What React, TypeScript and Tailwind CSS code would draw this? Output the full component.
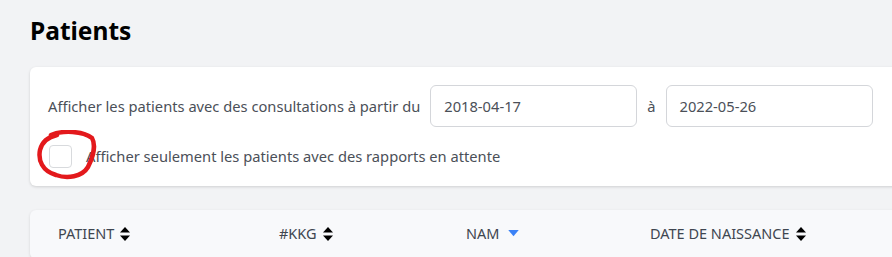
function SortIcon() {
  return (
    <svg viewBox="0 0 10 16" className="h-[16px] w-[10px] text-black" fill="currentColor">
      <path d="M5 1 L10 6.5 H0 Z" />
      <path d="M5 15 L10 9.5 H0 Z" />
    </svg>
  );
}

function CaretDown() {
  return (
    <svg viewBox="0 0 12 8" className="h-[7px] w-[11px] text-[#3b82f6]" fill="currentColor">
      <path d="M0 0 H12 L6 7 Z" />
    </svg>
  );
}

export default function App() {
  return (
    <div
      className="h-[257px] w-[892px] overflow-hidden bg-[#f2f3f5] pl-[30px] pt-[15px]"
      style={{ fontFamily: '"Noto Sans", "Open Sans", sans-serif' }}
    >
      <h1 className="text-[24.5px] font-bold leading-[32px] text-black">Patients</h1>

      <div className="mt-[20px] w-[900px] rounded-[6px] bg-white pb-[18px] pl-[18px] pr-4 pt-[18px] shadow-[0_1px_3px_rgba(0,0,0,0.15)]">
        <div className="flex items-center">
          <p className="text-[14.7px] text-[#4b5058]">
            Afficher les patients avec des consultations à partir du
          </p>
          <div className="ml-[10px] flex h-[42px] w-[207px] items-center rounded-[6px] border border-[#d4d6da] px-[13px] text-[14.7px] text-[#4b5058]">
            2018-04-17
          </div>
          <span className="mx-[10px] text-[14.7px] text-[#4b5058]">à</span>
          <div className="flex h-[42px] w-[207px] items-center rounded-[6px] border border-[#d4d6da] px-[13px] text-[14.7px] text-[#4b5058]">
            2022-05-26
          </div>
        </div>
        <div className="relative mt-[18px] flex items-center">
          <div className="ml-px h-[23px] w-[23px] rounded-[4px] border border-[#d8dadd] bg-white" />
          <p className="ml-[14px] text-[14.7px] text-[#4b5058]">
            Afficher seulement les patients avec des rapports en attente
          </p>
          <svg
            viewBox="0 0 60 50"
            className="absolute left-[-11px] top-[-15px] h-[50px] w-[60px]"
            fill="none"
          >
            <path
              d="M14 5 C26 0 46 1 55 8 C59 15 56 27 51 37 C45 47 30 49 19 45 C5 41 1 30 3 20 C5 12 11 7 20 5"
              stroke="#e3191c"
              strokeWidth="4.5"
              strokeLinecap="round"
            />
          </svg>
        </div>
      </div>

      <div className="mt-[24px] grid w-[900px] grid-cols-[221px_187px_184px_1fr] items-center rounded-[6px] bg-[#f8f9fb] pl-[28px] pt-[13px] pb-[14px] text-[14.5px] uppercase text-[#3f4650] shadow-[0_1px_3px_rgba(0,0,0,0.12)]">
        <div className="flex items-center gap-[6px]">
          PATIENT <SortIcon />
        </div>
        <div className="flex items-center gap-[6px]">
          #KKG <SortIcon />
        </div>
        <div className="flex items-center gap-[9px]">
          NAM <CaretDown />
        </div>
        <div className="flex items-center gap-[6px]">
          DATE DE NAISSANCE <SortIcon />
        </div>
      </div>
    </div>
  );
}
